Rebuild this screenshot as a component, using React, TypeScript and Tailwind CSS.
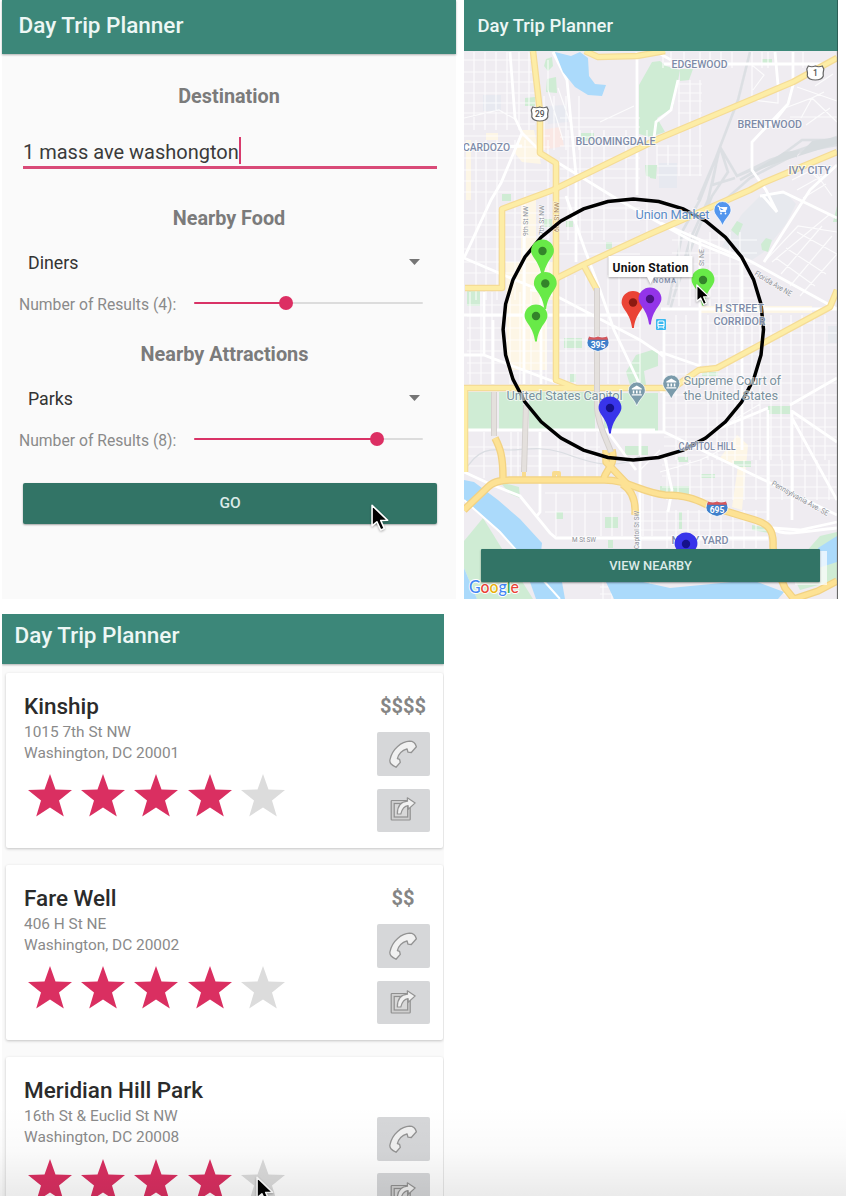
import React from "react";

function Cursor({ className }: { className: string }) {
  return (
    <svg
      className={`absolute [filter:drop-shadow(0_1px_1px_rgba(0,0,0,0.3))] ${className}`}
      viewBox="0 0 18 26"
      aria-hidden="true"
    >
      <path
        d="M1 1 L1 20.5 L5.6 16.6 L9.2 24.4 L12.6 22.8 L9.2 15.3 L15.8 15.2 Z"
        fill="#000"
        stroke="#fff"
        strokeWidth="1.5"
        strokeLinejoin="round"
      />
    </svg>
  );
}

function Slider({ percent }: { percent: number }) {
  return (
    <div className="relative ml-auto h-[14px] w-[229px]">
      <div className="absolute inset-x-0 top-[6px] h-[2px] rounded bg-[#dcdcdc]" />
      <div
        className="absolute left-0 top-[5.750px] h-[2.500px] rounded bg-[#d93266]"
        style={{ width: `${percent}%` }}
      />
      <div
        className="absolute top-0 -ml-[7px] size-[14px] rounded-full bg-[#dc2f63]"
        style={{ left: `${percent}%` }}
      />
    </div>
  );
}

function Dropdown({ value }: { value: string }) {
  return (
    <div className="flex h-6 items-center justify-between pl-[26px] pr-[36px] text-[17.800px] leading-6 text-[#333]">
      <span className="relative top-px">{value}</span>
      <svg className="h-[6px] w-[11px]" viewBox="0 0 11 6">
        <path d="M0 0H11L5.5 6Z" fill="#757575" />
      </svg>
    </div>
  );
}

function PlannerForm() {
  return (
    <section className="relative ml-[2px] flex h-[599px] w-[454px] flex-col bg-[#fafafa]">
      <header className="h-[54px] shrink-0 bg-[#3c8779] pl-[16.500px] pt-[13px] text-[22.500px] font-medium leading-6 text-[#edf7f5] shadow-[0_1px_2px_rgba(0,0,0,0.3)]">
        Day Trip Planner
      </header>
      <h2 className="mt-[31px] h-6 text-center text-[19.8px] font-bold leading-6 text-[#7b7b7b]">
        Destination
      </h2>
      <div className="ml-[21px] mt-[27px] flex h-[33px] w-[414px] border-b-[3px] border-[#d94a78] text-[20px] leading-[32px] text-[#3b3b3b]">
        <span>1 mass ave washongton</span>
        <span className="mt-px h-[27px] w-[2px] bg-[#d83a6c]" />
      </div>
      <h2 className="mt-[38px] h-6 text-center text-[19.8px] font-bold leading-6 text-[#7b7b7b]">
        Nearby Food
      </h2>
      <div className="mt-[19px]">
        <Dropdown value="Diners" />
      </div>
      <div className="mt-[17px] flex h-6 items-center pl-[17px] pr-[33px] text-[15.700px] leading-6 text-[#8a8a8a]">
        <span className="relative top-[2px]">Number of Results (4):</span>
        <Slider percent={40} />
      </div>
      <h2 className="mt-[28px] h-6 pr-[9px] text-center text-[19.9px] font-bold leading-6 text-[#7b7b7b]">
        Nearby Attractions
      </h2>
      <div className="mt-[19px]">
        <Dropdown value="Parks" />
      </div>
      <div className="mt-[17px] flex h-6 items-center pl-[17px] pr-[33px] text-[15.700px] leading-6 text-[#8a8a8a]">
        <span className="relative top-[2px]">Number of Results (8):</span>
        <Slider percent={80} />
      </div>
      <button className="ml-[21px] mt-[31.500px] h-[41px] w-[414px] rounded-[2px] bg-[#327466] pt-px text-[15.5px] font-medium text-[#dcebe8] shadow-[0_1px_2px_rgba(0,0,0,0.35)]">
        GO
      </button>
      <Cursor className="left-[369px] top-[504px] h-[28px] w-[19px]" />
    </section>
  );
}

/* ---------- map ---------- */

const PARKS = [
  "M639 85L652 62L660 61L666 66L680 70L673 108L657 118L665 132L650 137L639 134Z",
  "M546 59L552 57L553 66L548 71L544 66Z",
  "M547 79L556 77L557 93L546 92Z",
  "M525 98L535 97L535 106L525 106Z",
  "M645 165L657 165L656 178L646 176Z",
  "M650 165L656 166L656 179L650 178Z",
  "M680 69L693 69L689 80L680 81Z",
  "M762 59h10v4h-10z",
  "M581 133h13v8h-13z",
  "M502 194h9v7h-9z",
  "M467 290h13v16h-13z",
  "M464 392H494V431H464Z",
  "M499 392H523V431H499Z",
  "M529 392H595V431H529Z",
  "M604 393H658V431H604Z",
  "M564 338h18v10h-18z",
  "M570 374h6v8h-6z",
  "M636 355L652 350L658 352L658 366L644 371L646 385L630 385L626 372Z",
  "M731 230L737 221L743 224L738 236Z",
  "M761 244L766 238L772 240L768 252L762 250Z",
  "M702 372h16v4h-16z",
  "M768 406h22v8h-22z",
  "M625 446h23v9h-23z",
  "M734 461h17v6h-17z",
  "M678 457h10v5h-10z",
  "M701 474h14v4h-14z",
  "M660 486h29v9h-29z",
  "M556 512h7v7h-7z",
  "M605 517h13v11h-13z",
  "M608 540h5v8h-5z",
  "M679 512h3v17h-3z",
  "M464 541L483 518L533 599H477L464 568Z",
  "M500 482L519 487L520 498L510 494Z",
  "M752 525L768 528L769 533L752 530Z",
  "M837 206L833 222L837 222Z",
  "M820 536L837 532L837 580L800 590L790 570Z",
  "M606 242h6v7h-6z",
  "M544 219h8v8h-8z",
  "M566 221h7v6h-7z",
];

const WATER = [
  "M555 52L571 56L580 52L588 58L589 76L595 84L606 85L602 96L588 95L575 87L563 72Z",
  "M464 480L474 482L498 500L520 519L542 543L541 552L516 552L498 529L464 500Z",
  "M530 582H562L565 599H536Z",
  "M464 568L477 599H464Z",
  "M606 582H643L670 588L752 580L784 592L778 599H614Z",
  "M818 548L837 536V562L818 568Z",
];

const TINTS: [string, string][] = [
  ["M541 130L560 127L564 146L544 150Z", "#fae8e5"],
  ["M483 95H501V111H483Z", "#e7e9f0"],
  ["M545 106L566 105L568 122L548 124Z", "#e7e9f0"],
  ["M659 163H677V188H659Z", "#e7e9f0"],
  ["M763 193L785 192L796 204L786 224L764 252L752 260L722 246L742 214Z", "#e7e9ee"],
  ["M828 326H837V343H828Z", "#e7e9ee"],
  ["M506 262H553V300H547V370H507Z", "#fdf6e6"],
  ["M521 200H536V262H521Z", "#fdf6e6"],
  ["M522 130L534 130L541 164L522 162L514 152Z", "#fdf6e6"],
  ["M486 133H498V140H486Z", "#fdf6e6"],
  ["M466 140H471V200H466Z", "#fdf6e6"],
  ["M700 306H812V313H700Z", "#fdf6e6"],
  ["M737 435L748 445L742 510L732 507L738 466L720 458Z", "#fdf6e6"],
];

const vLines = (xs: number[], y1: number, y2: number) =>
  xs.map((x) => `M${x} ${y1}V${y2}`).join("");
const hLines = (ys: number[], x1: number, x2: number) =>
  ys.map((y) => `M${x1} ${y}H${x2}`).join("");

const MINOR_STREETS = [
  vLines([474, 485, 496, 507, 519, 529], 52, 130),
  hLines([60, 72, 82, 93, 103, 113, 124], 464, 535),
  hLines([136, 147, 158, 170, 181, 192], 464, 550),
  vLines([476, 486, 497, 515, 525, 548], 140, 300),
  vLines([544, 554, 566, 579], 96, 150),
  hLines([118, 127, 137, 146, 158, 169, 178], 560, 640),
  vLines([568, 580, 592, 604, 626, 647], 130, 240),
  vLines([679, 690, 700], 80, 176),
  hLines([84, 93, 101, 113], 678, 702),
  hLines([146, 155, 166, 175], 657, 702),
  vLines([657, 668], 145, 165),
  vLines([663, 671, 684, 700, 710, 721, 732, 752, 762, 768, 803], 52, 68),
  hLines([198, 208, 220, 232, 243, 254], 558, 640),
  hLines([213, 225, 237, 249, 262, 273], 464, 550),
  hLines([305, 316, 328, 340, 351, 363, 373], 467, 640),
  vLines([470, 481, 492, 510, 520, 531, 546], 292, 384),
  vLines([566, 575, 586, 608, 619, 640], 275, 384),
  vLines([676, 686, 708, 717, 727, 735, 752, 760, 771, 781, 791, 802, 814, 825], 315, 460),
  vLines([679, 690, 710, 719, 730, 740], 232, 306),
  hLines([240, 253, 264, 276, 288, 298], 672, 757),
  hLines([323, 333, 345, 354, 364, 374, 383, 395, 403, 418, 427, 437, 446], 664, 837),
  vLines([667, 678, 690, 701, 712, 722, 733, 744, 756, 769, 782, 793, 805, 817, 829], 460, 500),
  hLines([455, 465, 476, 487, 498], 662, 837),
  vLines([667, 676, 688, 699, 710, 721, 733, 744, 756], 510, 548),
  hLines([512, 521, 530, 540], 640, 768),
  vLines([484, 511, 518, 558, 572, 585, 597], 432, 478),
  hLines([447, 456, 466], 467, 600),
  vLines([556, 572, 585, 601, 612, 622, 643, 652], 492, 536),
  hLines([493, 512], 545, 636),
  vLines([603, 612, 621, 628, 650], 582, 599),
  hLines([587, 594], 600, 650),
  "M753 90L764 75L752 65V100L778 103V84M785 108L812 98L837 122M790 117H837M797 87L837 101M801 118L812 98L824 92M806 125L830 108M815 86L833 74",
  "M792 180L810 171L822 182M797 190L822 176M803 198L826 184M815 172L832 196M772 262L830 214M764 262L798 226L837 232M781 274L822 226M790 286L832 236M800 296L837 254M786 248L826 274M776 258L815 286M797 232L837 254",
  "M464 118L499 110L515 119M600 122L634 106M558 88L570 122M548 60V90L563 140",
  "M660 472L700 460L730 446M660 450L640 470M700 440L760 404",
].join("");

const MAJOR_STREETS = [
  "M510 52L515 118L522 133L542 153L617 199L690 240L745 262",
  "M522 133L501 183L491 200L464 258",
  "M464 148L522 146",
  "M553 52L567 80L576 175V262",
  "M637 52V195M464 258L520 282L560 298L640 340L658 352L664 357",
  "M530 290L556 292M524 205V384M541 205V384M566 196L585 250L600 290L614 330L640 385",
  "M464 315H640M493 384V320M484 292V355L560 384M464 355H484",
  "M664 64H825M657 52L671 60M775 52L778 85M793 52L793 85L788 104L752 142L752 170L766 190L777 212L762 195M788 104L771 126M678 80L671 110L656 122L654 138",
  "M760 196L783 192L837 218M661 223L752 262L837 309M661 309H837M764 262L810 190L837 165",
  "M700 240V366M664 330V432M742 262V450M768 410V520M792 410V520M600 432H664L687 443L837 515M660 352L700 366M790 405L837 378M793 412L837 442M710 432L768 408M792 418L837 500M660 392L668 388",
  "M464 430H655M640 430V599M540 432V512L536 517M464 472L490 484L520 496L550 533L556 538H640M608 432L636 470M640 538H768",
  "M772 528L800 530L837 522M773 529C785 537 805 531 837 528M784 592L792 599M664 454L672 490L668 512",
].join("");

const HIGHWAYS = [
  "M533 51L540 112V153L556 163V380L576 388",
  "M465 288H502V209L553 190L660 138L793 82L837 58",
  "M557 278L583 265L650 234L750 190L763 183L837 152",
  "M585 51L598 57L637 56L665 51",
  "M464 388H673L699 370L717 368L830 307L837 290",
  "M465 388V472",
  "M583 264L597 290",
];

const FREEWAYS = [
  "M464 510L488 487C494 481 502 480 512 480H604C628 480 640 492 665 495C690 495 700 502 712 507L755 520C768 524 774 530 773 546L774 562L785 588L794 599",
  "M495 438C500 448 503 455 503 479M612 450C616 465 606 470 604 478M606 450V462L628 485M635 515C636 500 632 490 622 484",
  "M794 599L818 591L837 581",
];

const RAIL =
  "M750 52L738 100L720 147L700 200L683 230L668 305M720 147L708 200L690 240L670 310M720 147L728 172L712 196L696 235L676 290M720 147L737 176L770 160L837 137M737 176L766 164L800 152L837 145M740 180L775 160L802 140L837 140M725 200L750 178L790 157M715 160L698 200M716 165L712 185L735 178";

const RAMPS = "M597 288V408C598 425 606 438 611 452M494 392V436M526 405L524 472";

function Shield({ x, y, n }: { x: number; y: number; n: string }) {
  return (
    <g transform={`translate(${x} ${y})`}>
      <path
        d="M-7 -7Q-3.5 -5.5 0 -7Q3.5 -5.5 7 -7L8.5 -4Q7.5 0 8 3Q6.5 7 0 7Q-6.500 7 -8 3Q-7.500 0 -8.500 -4Z"
        fill="#fff"
        stroke="#666"
        strokeWidth="1.2"
      />
      <text y="3" fontSize="8.500" fontWeight="500" textAnchor="middle" fill="#555">
        {n}
      </text>
    </g>
  );
}

function Interstate({ x, y, n }: { x: number; y: number; n: string }) {
  return (
    <g transform={`translate(${x} ${y})`}>
      <path
        d="M-9 -7Q-4 -5 0 -7Q4 -5 9 -7Q13 0 9 4Q5 7 0 8Q-5 7 -9 4Q-13 0 -9 -7Z"
        fill="#3f7fcb"
        stroke="#fff"
        strokeWidth="0.8"
      />
      <path d="M-9 -7Q-4 -5 0 -7Q4 -5 9 -7L10 -3.800H-10Z" fill="#d8575a" />
      <text y="4.200" fontSize="8.500" fontWeight="700" textAnchor="middle" fill="#fff">
        {n}
      </text>
    </g>
  );
}

function Pin({ x, y, fill, dot }: { x: number; y: number; fill: string; dot: string }) {
  return (
    <g transform={`translate(${x} ${y})`}>
      <path
        d="M0 -11.500A11.400 11.400 0 0 1 11.400 0C11.400 6 2.400 11 0.900 25.500H-0.900C-2.400 11 -11.400 6 -11.400 0A11.400 11.400 0 0 1 0 -11.500Z"
        fill={fill}
      />
      <circle r="4.200" fill={dot} />
    </g>
  );
}

function PlaceIcon({ x, y, fill, children }: { x: number; y: number; fill: string; children: React.ReactNode }) {
  return (
    <g transform={`translate(${x} ${y})`}>
      <path
        d="M0 -8.500A8.500 8.500 0 0 1 8.500 0C8.500 5 3 8 0 15.500C-3 8 -8.500 5 -8.500 0A8.500 8.500 0 0 1 0 -8.500Z"
        fill={fill}
        stroke="#fff"
        strokeWidth="0.7"
      />
      {children}
    </g>
  );
}

const museum = (
  <path
    d="M-5 -2L0 -5L5 -2V-1H-5ZM-4 0H-2.500V3H-4ZM-0.800 0H0.800V3H-0.800ZM2.500 0H4V3H2.500ZM-5 3.700H5V5H-5Z"
    fill="#fff"
  />
);

const RADIUS_POINTS = Array.from({ length: 32 }, (_, i) => {
  const a = (i * Math.PI) / 16;
  return `${(633.3 + 130.2 * Math.sin(a)).toFixed(1)},${(329.5 - 130.5 * Math.cos(a)).toFixed(1)}`;
}).join(" ");

function DistrictLabel({ x, y, w, children }: { x: number; y: number; w: number; children: string }) {
  return (
    <text
      x={x}
      y={y}
      textLength={w}
      lengthAdjust="spacingAndGlyphs"
      fontSize="11"
      fontWeight="500"
      fill="#7d8ba8"
      stroke="#fff"
      strokeWidth="2"
      strokeOpacity="0.7"
      paintOrder="stroke"
    >
      {children}
    </text>
  );
}

function StreetLabel({
  x,
  y,
  angle = 0,
  w,
  fill = "#8b8f96",
  children,
}: {
  x: number;
  y: number;
  angle?: number;
  w: number;
  fill?: string;
  children: string;
}) {
  return (
    <text
      transform={`translate(${x} ${y}) rotate(${angle})`}
      textLength={w}
      lengthAdjust="spacingAndGlyphs"
      fontSize="7.800"
      fill={fill}
      stroke="#fff"
      strokeWidth="1.500"
      strokeOpacity="0.5"
      paintOrder="stroke"
    >
      {children}
    </text>
  );
}

function CityMap() {
  return (
    <svg className="block h-[548px] w-[374px] font-['Roboto',sans-serif]" viewBox="464 51 374 548">
      <rect x="464" y="51" width="374" height="548" fill="#efecf1" />
      {TINTS.map(([d, fill]) => (
        <path key={d} d={d} fill={fill} />
      ))}
      {PARKS.map((d) => (
        <path key={d} d={d} fill="#cfecd4" />
      ))}
      <path d={RAIL} fill="none" stroke="#d8dde1" strokeWidth="2.600" strokeOpacity="0.85" />
      <path d="M812 141L837 137V144L780 162L748 174L784 152L800 150L796 158Z" fill="#d7dcdf" />
      <path d={MINOR_STREETS} fill="none" stroke="#fff" strokeWidth="1.200" strokeOpacity="0.8" />
      <path d={MAJOR_STREETS} fill="none" stroke="#fff" strokeWidth="2.800" />
      <path
        d="M464 472C480 444 496 450 510 450S540 446 560 452S610 474 640 456"
        fill="none"
        stroke="#dadde2"
        strokeWidth="1.200"
      />
      {WATER.map((d) => (
        <path key={d} d={d} fill="#abdafb" />
      ))}
      <path d="M464 500L500 532L516 550L560 599" fill="none" stroke="#fff" strokeWidth="2" />
      <g fill="none" strokeLinejoin="round">
        {HIGHWAYS.map((d) => (
          <path key={d} d={d} stroke="#f5dc96" strokeWidth="6.600" />
        ))}
        {HIGHWAYS.map((d) => (
          <path key={d} d={d} stroke="#fdeda6" strokeWidth="4.200" />
        ))}
        <path d="M524 458V479M554 480V473H559V480" stroke="#f9dc8f" strokeWidth="4" />
        {FREEWAYS.map((d) => (
          <path key={d} d={d} stroke="#f2d283" strokeWidth="7.500" />
        ))}
        {FREEWAYS.map((d) => (
          <path key={d} d={d} stroke="#fde294" strokeWidth="5" />
        ))}
        <path d={RAMPS} stroke="#d3cfcc" strokeWidth="6" />
        <path d={RAMPS} stroke="#e4e0dd" strokeWidth="4.200" />
      </g>

      <Shield x={539.8} y={114} n="29" />
      <Shield x={815.3} y={73} n="1" />

      <DistrictLabel x={671.5} y={68.300} w={56}>EDGEWOOD</DistrictLabel>
      <DistrictLabel x={737.5} y={128.300} w={64.500}>BRENTWOOD</DistrictLabel>
      <DistrictLabel x={788.5} y={173.500} w={42}>IVY CITY</DistrictLabel>
      <DistrictLabel x={575.5} y={145} w={80}>BLOOMINGDALE</DistrictLabel>
      <DistrictLabel x={463} y={151} w={47}>CARDOZO</DistrictLabel>
      <DistrictLabel x={671.5} y={543.500} w={57}>NAVY YARD</DistrictLabel>
      <text x="653" y="283" fontSize="7" fontWeight="500" textLength="23" fill="#7d8ba8">
        NOMA
      </text>

      <StreetLabel x={528} y={236} angle={-90} w={30}>9th St NW</StreetLabel>
      <StreetLabel x={543.5} y={235} angle={-90} w={30}>7th St NW</StreetLabel>
      <StreetLabel x={558.5} y={232} angle={-90} w={30} fill="#a5835c">6th St NW</StreetLabel>
      <StreetLabel x={704} y={266} angle={-90} w={17}>St NE</StreetLabel>
      <StreetLabel x={639} y={549} angle={-90} w={38}>Capitol St SW</StreetLabel>
      <StreetLabel x={572} y={542} w={24}>M St SW</StreetLabel>
      <StreetLabel x={754} y={275} angle={31} w={42}>Florida Ave NE</StreetLabel>
      <StreetLabel x={771} y={485} angle={29} w={64}>Pennsylvania Ave. SE</StreetLabel>

      <Interstate x={598} y={343.500} n="395" />
      <Interstate x={717} y={508.500} n="695" />

      <polygon points={RADIUS_POINTS} fill="none" stroke="#000" strokeWidth="3.500" />

      <DistrictLabel x={715} y={312} w={49}>H STREET</DistrictLabel>
      <DistrictLabel x={713.5} y={325} w={52}>CORRIDOR</DistrictLabel>
      <DistrictLabel x={678.5} y={450} w={57}>CAPITOL HILL</DistrictLabel>
      <g
        fontSize="12.800"
        fill="#7b929e"
        stroke="#fff"
        strokeWidth="2"
        strokeOpacity="0.65"
        paintOrder="stroke"
      >
        <text x="635.500" y="218.500" textLength="74" fill="#5b8cc7">Union Market</text>
        <text x="506.500" y="399.500" textLength="116">United States Capitol</text>
        <text x="683.500" y="385" textLength="97.500">Supreme Court of</text>
        <text x="683.500" y="399.500" textLength="94.500">the United States</text>
      </g>

      <PlaceIcon x={722.500} y={210} fill="#5396ee">
        <path d="M-5 -4H-3.500L-2 1.500H3.500M-3 -2.500H4.500L3.300 0.500H-2.300Z" fill="#fff" stroke="#fff" strokeWidth="0.9" />
        <circle cx="-1.500" cy="3.500" r="0.900" fill="#fff" />
        <circle cx="3" cy="3.500" r="0.900" fill="#fff" />
      </PlaceIcon>
      <PlaceIcon x={636.800} y={390.500} fill="#7b9bab">{museum}</PlaceIcon>
      <PlaceIcon x={671.300} y={383.500} fill="#7b9bab">{museum}</PlaceIcon>
      <g transform="translate(661 324.500)">
        <rect x="-5" y="-5.500" width="10" height="11" rx="1" fill="#3cb9f0" />
        <rect x="-3" y="-3.500" width="6" height="6" rx="1" fill="none" stroke="#fff" strokeWidth="1.100" />
        <path d="M-3 0H3M-2 2.500L-3 4.300M2 2.500L3 4.300" stroke="#fff" strokeWidth="1" />
      </g>

      <Pin x={542.500} y={251} fill="#68ea48" dot="#33832a" />
      <Pin x={545.300} y={283.500} fill="#68ea48" dot="#33832a" />
      <Pin x={536} y={316} fill="#68ea48" dot="#33832a" />
      <Pin x={703} y={280} fill="#68ea48" dot="#33832a" />
      <Pin x={633} y={302.500} fill="#ea4335" dot="#8c1a10" />
      <Pin x={650} y={299} fill="#9334e9" dot="#4b1382" />
      <Pin x={610} y={408} fill="#3834ea" dot="#15118a" />
      <Pin x={686} y={544} fill="#3834ea" dot="#15118a" />

      <path
        d="M608.500 256H692.500V277H654L650.500 284L647 277H608.500Z"
        fill="#fff"
        className="[filter:drop-shadow(0_1px_1px_rgba(0,0,0,0.3))]"
      />
      <text x="612.500" y="271.500" fontSize="12" fontWeight="700" textLength="76" fill="#111">
        Union Station
      </text>

      <text
        x="469"
        y="592.500"
        fontSize="17.500"
        fontWeight="500"
        textLength="50"
        lengthAdjust="spacingAndGlyphs"
        stroke="#fff"
        strokeWidth="2"
        paintOrder="stroke"
        className="font-['Lato',sans-serif]"
      >
        <tspan fill="#4285f4">G</tspan>
        <tspan fill="#ea4335">o</tspan>
        <tspan fill="#e9b20a">o</tspan>
        <tspan fill="#4285f4">g</tspan>
        <tspan fill="#34a853">l</tspan>
        <tspan fill="#ea4335">e</tspan>
      </text>
      <path d="M837.500 51V599" stroke="#686868" strokeWidth="1.200" />
    </svg>
  );
}

function MapScreen() {
  return (
    <section className="relative ml-2 h-[599px] w-[374px] overflow-hidden">
      <header className="h-[51px] border-r border-[#2b5f56] bg-[#3c8779] pl-[13.5px] pt-[14px] text-[18.5px] font-medium leading-6 text-[#edf7f5]">
        Day Trip Planner
      </header>
      <CityMap />
      <div className="absolute right-[11px] top-[551px] h-[34px] w-8 bg-white/70" />
      <button className="absolute left-[17px] top-[549px] h-[33px] w-[339px] rounded-[1px] bg-[#327466] text-[12.9px] font-medium text-[#dcebe8] shadow-[0_1px_2px_rgba(0,0,0,0.4)]">
        VIEW NEARBY
      </button>
      <Cursor className="left-[231.500px] top-[284px] h-[22px] w-[15px]" />
    </section>
  );
}

/* ---------- results ---------- */

function Star({ filled }: { filled: boolean }) {
  return (
    <svg className="h-[43px] w-[44px] shrink-0" viewBox="0 0 44 43">
      <path
        d="M22 0L27.500 15.500L44 16L31 26.500L35.800 42.500L22 33.500L8.200 42.500L13 26.500L0 16L16.500 15.500Z"
        fill={filled ? "#da2f61" : "#dcdcdc"}
      />
    </svg>
  );
}

function PhoneIcon() {
  return (
    <svg className="h-[28px] w-[28px]" viewBox="0 0 28 28">
      <path
        d="M20.500 1.200C13 1.500 3 8.500 0.900 20C0.500 23 2 24.500 7 27.300L11.300 22.400L10.600 19.300L8.400 18.600C9.500 14 13.500 10.200 18 8.800L19 12.200L22.300 12.500L27.400 6.800C26.500 3.500 24 1.200 20.500 1.200Z"
        fill="#f1f1f1"
        stroke="#939393"
        strokeWidth="1.300"
        strokeLinejoin="round"
      />
    </svg>
  );
}

function ShareIcon() {
  return (
    <svg className="h-[24px] w-[26px]" viewBox="0 0 26 24">
      <rect x="1.200" y="3.500" width="19" height="19.500" rx="0.800" fill="#cfcfcf" stroke="#8f8f8f" strokeWidth="1.200" />
      <rect x="4.200" y="6.500" width="13.500" height="13.500" fill="#d8d8d8" stroke="#8f8f8f" strokeWidth="1.200" />
      <path
        d="M7.300 17C7.300 9.500 11 4.600 17.500 4.100L17.300 0.800L25.200 5.900L18.300 12.200L18.100 8.600C14 9 12 12 10.800 17Z"
        fill="#f1f1f1"
        stroke="#939393"
        strokeWidth="1.200"
        strokeLinejoin="round"
      />
    </svg>
  );
}

type Place = { name: string; street: string; city: string; price: string };

const PLACES: Place[] = [
  { name: "Kinship", street: "1015 7th St NW", city: "Washington, DC 20001", price: "$$$$" },
  { name: "Fare Well", street: "406 H St NE", city: "Washington, DC 20002", price: "$$" },
  { name: "Meridian Hill Park", street: "16th St & Euclid St NW", city: "Washington, DC 20008", price: "" },
];

function PlaceCard({ place }: { place: Place }) {
  return (
    <article className="flex h-[175.500px] shrink-0 justify-between rounded-[2px] bg-white pl-[18px] pr-[13.500px] shadow-[0_1px_3px_rgba(0,0,0,0.22)]">
      <div className="pt-[20px]">
        <h3 className="h-[28px] text-[22.500px] font-medium leading-[27px] text-[#2b2b2b]">{place.name}</h3>
        <p className="h-[21px] text-[15.400px] leading-[23px] text-[#8a8a8a]">{place.street}</p>
        <p className="h-[21px] text-[15.400px] leading-[23px] text-[#8a8a8a]">{place.city}</p>
        <div className="ml-1 mt-[11.500px] flex gap-[9.200px]">
          {[0, 1, 2, 3, 4].map((i) => (
            <Star key={i} filled={i < 4} />
          ))}
        </div>
      </div>
      <div className="flex w-[53px] flex-col items-center pt-[20px]">
        <span className="h-[26px] text-[20px] font-bold leading-[26px] text-[#858585]">{place.price}</span>
        <span className="mt-[13.500px] flex h-[44px] w-[53px] items-center justify-center rounded-[2px] bg-[#d6d7d9]">
          <PhoneIcon />
        </span>
        <span className="mt-[12.500px] flex h-[43.500px] w-[53px] items-center justify-center rounded-[2px] bg-[#d6d7d9] pb-[2px]">
          <ShareIcon />
        </span>
      </div>
    </article>
  );
}

function ResultsScreen() {
  return (
    <section className="relative ml-[2px] flex h-[582px] w-[442px] flex-col overflow-hidden bg-[#fafafa]">
      <header className="h-[50px] shrink-0 bg-[#3c8779] pl-[12.500px] pt-[9px] text-[22.500px] font-medium leading-6 text-[#edf7f5] shadow-[0_1px_2px_rgba(0,0,0,0.3)]">
        Day Trip Planner
      </header>
      <div className="flex flex-col gap-[16.750px] pl-1 pr-px pt-[8.500px]">
        {PLACES.map((place) => (
          <PlaceCard key={place.name} place={place} />
        ))}
      </div>
      <Cursor className="left-[254px] top-[562px] h-[28px] w-[19px]" />
    </section>
  );
}

export default function App() {
  return (
    <main className="relative flex h-[1196px] w-[846px] flex-col overflow-hidden bg-white font-['Roboto',sans-serif]">
      <div className="flex h-[614px] shrink-0">
        <PlannerForm />
        <MapScreen />
      </div>
      <ResultsScreen />
      <div className="absolute inset-x-0 bottom-0 h-[90px] bg-gradient-to-b from-transparent via-black/2 to-black/8" />
    </main>
  );
}
